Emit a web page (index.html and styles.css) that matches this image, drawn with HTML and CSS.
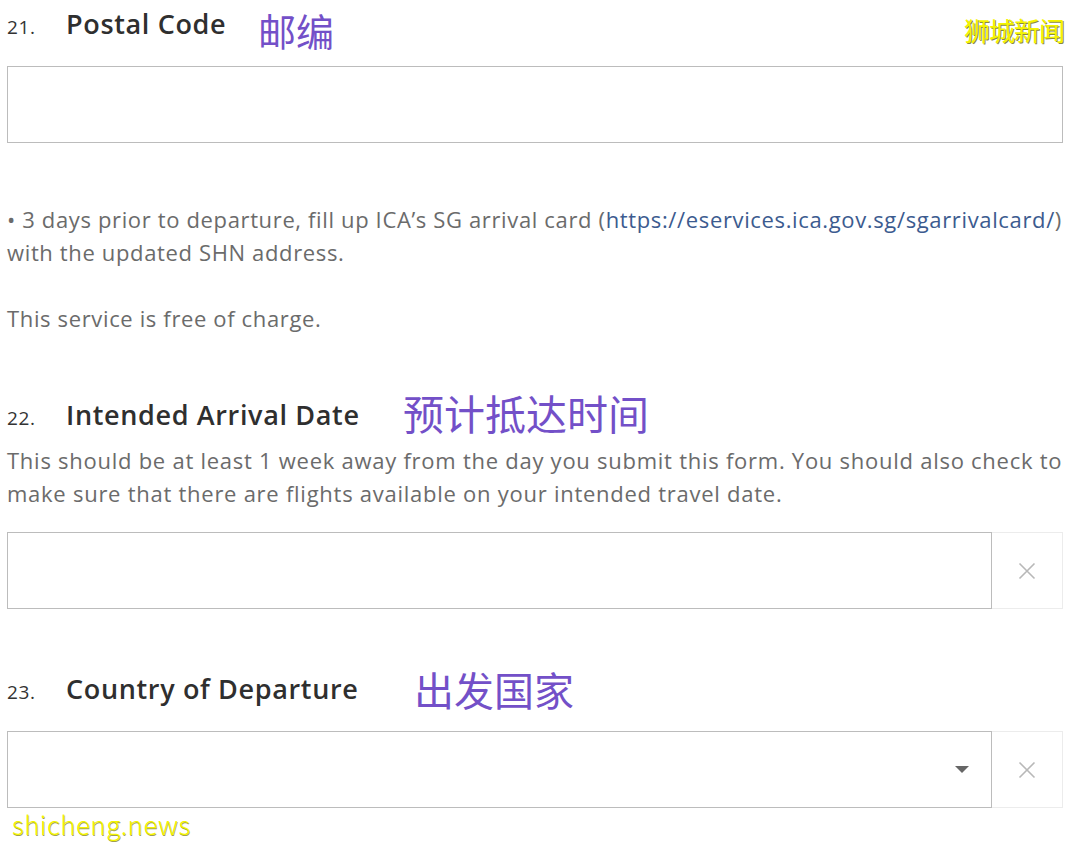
FILE: index.html
```html
<!DOCTYPE html>
<html lang="en">
<head>
<meta charset="utf-8">
<title>Form</title>
<link rel="stylesheet" href="styles.css">
</head>
<body>
<main class="form">
  <span class="wm wm-top">狮城新闻</span>

  <section class="q">
    <h2 class="q-title">
      <span class="q-num">21.</span>
      <span class="q-label">Postal Code</span>
      <span class="note note-21">邮编</span>
    </h2>
    <div class="field"><input class="text-input" type="text"></div>
  </section>

  <div class="info">
    <p>• 3 days prior to departure, fill up ICA’s SG arrival card (<a class="link" href="#">https://eservices.ica.gov.sg/sgarrivalcard/</a>)<br>with the updated SHN address.</p>
    <p>This service is free of charge.</p>
  </div>

  <section class="q q-22">
    <h2 class="q-title">
      <span class="q-num">22.</span>
      <span class="q-label">Intended Arrival Date</span>
      <span class="note note-22">预计抵达时间</span>
    </h2>
    <p class="q-desc">This should be at least 1 week away from the day you submit this form. You should also check to<br>make sure that there are flights available on your intended travel date.</p>
    <div class="field field-row">
      <input class="text-input grow" type="text">
      <button class="clear-btn" type="button" aria-label="Clear">
        <svg width="18" height="18" viewBox="0 0 18 18"><path d="M1.5 1.5 L16.5 16.5 M16.5 1.5 L1.5 16.5" stroke="#b8b8b8" stroke-width="1.6" fill="none"/></svg>
      </button>
    </div>
  </section>

  <section class="q q-23">
    <h2 class="q-title">
      <span class="q-num">23.</span>
      <span class="q-label">Country of Departure</span>
      <span class="note note-23">出发国家</span>
    </h2>
    <div class="field field-row">
      <div class="select grow"><span class="caret"></span></div>
      <button class="clear-btn" type="button" aria-label="Clear">
        <svg width="18" height="18" viewBox="0 0 18 18"><path d="M1.5 1.5 L16.5 16.5 M16.5 1.5 L1.5 16.5" stroke="#b8b8b8" stroke-width="1.6" fill="none"/></svg>
      </button>
    </div>
  </section>

  <span class="wm wm-bottom">shicheng.news</span>
</main>
</body>
</html>
```

FILE: styles.css
```css
* { box-sizing: border-box; }
html, body { margin: 0; padding: 0; background: #fff; }
body {
  font-family: "Open Sans", "Noto Sans", "Noto Sans CJK SC", sans-serif;
  color: #6b6b6b;
}
.form {
  position: relative;
  width: 1056px;
  margin-left: 7px;
  height: 848px;
}
.q-title {
  position: relative;
  margin: 0;
  display: flex;
  align-items: baseline;
  height: 48px;
  line-height: 48px;
  font-weight: 600;
  color: #2f2f2f;
}
.q-num {
  width: 59px;
  font-size: 19px;
  font-weight: 500;
  letter-spacing: 0.6px;
  color: #333;
}
.q-label {
  font-size: 27px;
  font-weight: 600;
  letter-spacing: 0.65px;
}
.note {
  position: absolute;
  top: 0;
  font-family: "Noto Sans CJK SC", sans-serif;
  font-weight: 400;
  color: #7350c8;
  line-height: 1;
  letter-spacing: 0;
}
.note-21 { left: 251px; top: 11px; font-size: 38px; }
.note-22 { left: 396px; top: 1px; font-size: 41px; }
.note-23 { left: 407px; top: 4px; font-size: 40px; }

.field { margin-top: 18px; }
.text-input {
  display: block;
  width: 100%;
  height: 77px;
  border: 1px solid #bcbcbc;
  background: #fff;
  margin: 0;
  padding: 0 16px;
  font: inherit;
}
.field-row { display: flex; }
.grow { flex: 1; min-width: 0; width: auto; }
.clear-btn {
  width: 71px;
  height: 77px;
  border: 1px solid #ececec;
  border-left: none;
  background: #fff;
  padding: 0;
  display: flex;
  align-items: center;
  justify-content: center;
}
.select {
  position: relative;
  height: 77px;
  border: 1px solid #bcbcbc;
  display: flex;
  align-items: center;
  justify-content: flex-end;
  padding-right: 22px;
}
.caret {
  width: 0;
  height: 0;
  border-left: 7px solid transparent;
  border-right: 7px solid transparent;
  border-top: 7px solid #666;
}

.info {
  margin-top: 60px;
  font-size: 22px;
  line-height: 33px;
  letter-spacing: 0.64px;
  white-space: nowrap;
}
.info p { margin: 0 0 33px; }
.info p:last-child { margin-bottom: 0; }
.link { color: #3c5b8f; text-decoration: none; }

.q-22 { margin-top: 56px; }
.q-desc {
  margin: 5px 0 0;
  font-size: 22px;
  line-height: 33px;
  letter-spacing: 0.74px;
  white-space: nowrap;
}
.q-22 .field { margin-top: 22px; }
.q-23 { margin-top: 56px; }

.wm {
  position: absolute;
  color: #f4f400;
  font-family: "Noto Sans CJK SC", sans-serif;
  text-shadow: 1px 1px 0 #8a8a40;
  line-height: 1;
}
.wm-top { right: -1px; top: 17px; font-size: 26px; letter-spacing: -1px; }
.wm-bottom { left: 5px; top: 811px; font-size: 26px; font-weight: 300; text-shadow: 0.5px 0.5px 0 #a0a050; letter-spacing: 0.4px; }
```
